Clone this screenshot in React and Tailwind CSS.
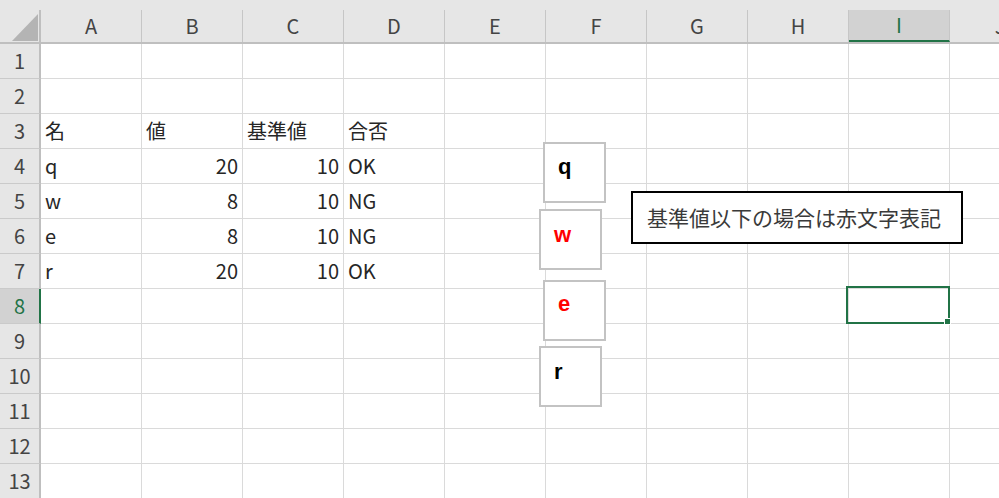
import React from 'react';

const COLS = ['A', 'B', 'C', 'D', 'E', 'F', 'G', 'H', 'I', 'J'];

const DATA = {
    3: ['名', '値', '基準値', '合否'],
    4: ['q', '20', '10', 'OK'],
    5: ['w', '8', '10', 'NG'],
    6: ['e', '8', '10', 'NG'],
    7: ['r', '20', '10', 'OK'],
};

const isNum = (v) => /^\d+$/.test(v);

const shapes = [
    { label: 'q', red: false, pos: 'left-[543px] top-[142px] pt-[9px]' },
    { label: 'w', red: true, pos: 'left-[539px] top-[209px] pt-[10px]' },
    { label: 'e', red: true, pos: 'left-[543px] top-[280px] pt-[8px]' },
    { label: 'r', red: false, pos: 'left-[539px] top-[346px] pt-[10px]' },
];

const App = () => {
    return (
        <div className="relative w-[999px] h-[498px] overflow-hidden bg-white font-['Noto_Sans_CJK_JP','Noto_Sans',sans-serif] text-[#262626]">
            {/* Column headers */}
            <div className="flex h-[44px] bg-[#e6e6e6] border-b-2 border-[#bfbfbf]">
                <div className="w-[41px] shrink-0 pt-[10px]">
                    <div className="relative h-full border-r-2 border-[#bfbfbf]">
                        {/* corner triangle */}
                        <svg className="absolute left-[12px] top-[4px]" width="26" height="27" viewBox="0 0 26 27">
                            <polygon points="26,0 26,27 0,27" fill="#b4b4b4" />
                        </svg>
                    </div>
                </div>
                {COLS.map((c) => {
                    const sel = c === 'I';
                    return (
                        <div key={c} className="w-[101px] shrink-0 pt-[10px]">
                            <div
                                className={`h-full flex items-center justify-center text-[20px] border-r border-[#c6c6c6] ${
                                    sel ? 'bg-[#d2d2d2] text-[#217346] border-b-2 border-b-[#217346] -mb-[2px]' : 'text-[#444]'
                                }`}
                            >
                                {c}
                            </div>
                        </div>
                    );
                })}
            </div>

            {/* Rows */}
            {Array.from({ length: 13 }, (_, i) => i + 1).map((r) => {
                const sel = r === 8;
                const vals = DATA[r] || [];
                return (
                    <div key={r} className="flex h-[35px]">
                        <div
                            className={`w-[41px] shrink-0 flex items-center justify-center text-[20px] border-b border-[#cacaca] border-r-2 ${
                                sel ? 'bg-[#d2d2d2] text-[#217346] border-r-[#217346]' : 'bg-[#e6e6e6] text-[#444] border-r-[#bfbfbf]'
                            }`}
                        >
                            {r}
                        </div>
                        {COLS.map((c, ci) => {
                            const v = vals[ci];
                            return (
                                <div
                                    key={c}
                                    className={`w-[101px] shrink-0 flex items-center text-[20px] border-r border-b border-[#dadada] px-[4px] ${
                                        v && isNum(v) ? 'justify-end' : 'justify-start'
                                    }`}
                                >
                                    {v}
                                </div>
                            );
                        })}
                    </div>
                );
            })}

            {/* Selected cell I8 */}
            <div className="absolute left-[846px] top-[286px] w-[104px] h-[38px] border-2 border-[#217346]" />
            <div className="absolute left-[944px] top-[318px] w-[7px] h-[7px] bg-[#217346] border border-white" />

            {/* Shapes */}
            {shapes.map((s) => (
                <div
                    key={s.label}
                    className={`absolute ${s.pos} w-[63px] h-[61px] bg-white border-2 border-[#c3c3c3] pl-[13px] font-['Liberation_Sans',Arial,sans-serif] font-bold text-[22px] leading-[28px] ${
                        s.red ? 'text-[#ff0000]' : 'text-black'
                    }`}
                >
                    {s.label}
                </div>
            ))}

            {/* Text box */}
            <div className="absolute left-[631px] top-[191px] w-[332px] h-[53px] bg-white border-2 border-black flex items-center pl-[14px] text-[21px] text-[#3a3a3a]">
                基準値以下の場合は赤文字表記
            </div>
        </div>
    );
};

export default App;
